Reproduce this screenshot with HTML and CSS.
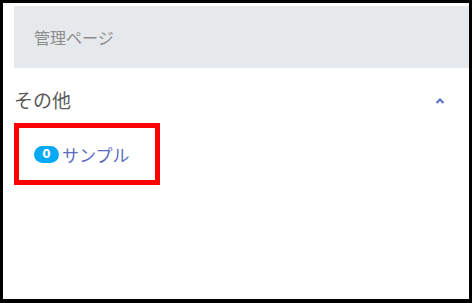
FILE: index.html
```html
<!DOCTYPE html>
<html lang="ja">
<head>
<meta charset="utf-8">
<link rel="stylesheet" href="styles.css">
</head>
<body>
<div class="frame">
  <div class="admin">管理ページ</div>
  <div class="section-head">
    <span class="section-title">その他</span>
    <svg class="chev" width="10" height="6" viewBox="0 0 10 6"><polyline points="1.5,5 5,1.5 8.5,5" fill="none" stroke="#5c6bc0" stroke-width="2"/></svg>
  </div>
  <div class="item-box">
    <span class="badge">0</span>
    <span class="item-label">サンプル</span>
  </div>
</div>
</body>
</html>
```
FILE: styles.css
```css
html, body {
  margin: 0;
  padding: 0;
  background: #fff;
}
.frame {
  width: 472px;
  height: 303px;
  box-sizing: border-box;
  border: 3px solid #000;
  border-bottom-width: 4px;
  padding-left: 11px;
  padding-top: 3px;
  font-family: "Noto Sans CJK JP", "Noto Sans", sans-serif;
}
.admin {
  height: 62px;
  line-height: 62px;
  background: #e6e9ec;
  padding-left: 20px;
  font-size: 16px;
  color: #8c8c8c;
}
.section-head {
  margin-top: 14px;
  height: 34px;
  display: flex;
  align-items: center;
  justify-content: space-between;
  padding-right: 24px;
}
.section-title {
  font-size: 19px;
  color: #5a5a5a;
}
.chev {
  margin-top: 3px;
}
.item-box {
  margin-top: 7px;
  width: 146px;
  height: 62px;
  box-sizing: border-box;
  border: 5px solid #ff0000;
  display: flex;
  align-items: center;
  padding-left: 15px;
  gap: 3px;
}
.badge {
  width: 25px;
  height: 17px;
  border-radius: 9px;
  background: #03a9f4;
  color: #fff;
  font-family: "DejaVu Sans", sans-serif;
  font-weight: bold;
  font-size: 12px;
  line-height: 17px;
  text-align: center;
}
.item-label {
  font-size: 17px;
  color: #5c6bc0;
}
```
